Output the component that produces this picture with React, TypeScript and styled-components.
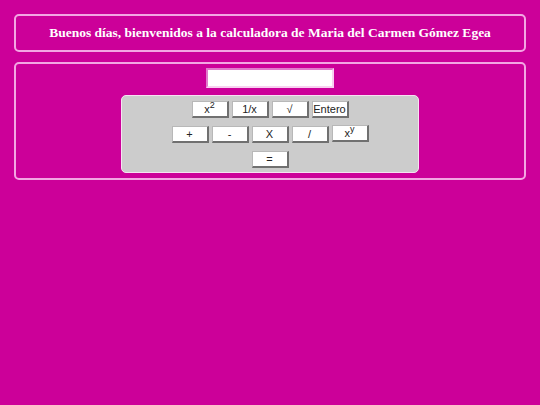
import React from 'react';
import styled, {createGlobalStyle} from 'styled-components';

const GlobalStyle = createGlobalStyle`
  html, body {
    margin: 0;
    padding: 0;
    background: #cc0099;
  }
  body {
    padding: 14px;
    font-family: "Liberation Serif", serif;
  }
`;

const Page = styled.div`
  display: flex;
  flex-direction: column;
  gap: 10px;
  width: 512px;
`;

const Frame = styled.div`
  border: 2px solid #f3a6e3;
  border-radius: 5px;
  box-sizing: border-box;
`;

const Header = styled(Frame)`
  height: 38px;
  display: flex;
  align-items: center;
  justify-content: center;
`;

const Title = styled.h1`
  margin: 0;
  font-family: "Liberation Serif", serif;
  font-weight: bold;
  font-size: 13.5px;
  color: #ffffff;
`;

const Body = styled(Frame)`
  height: 118px;
  display: flex;
  flex-direction: column;
  align-items: center;
  padding-top: 4px;
  gap: 7px;
`;

const Display = styled.input`
  width: 128px;
  height: 20px;
  box-sizing: border-box;
  border: 2px solid;
  border-color: #e07ccc #f8d0f0 #f8d0f0 #e07ccc;
  background: #ffffff;
  padding: 0 4px;
  font-family: "Liberation Sans", sans-serif;
  font-size: 12px;
`;

const Keypad = styled.div`
  width: 298px;
  height: 78px;
  box-sizing: border-box;
  background: #cccccc;
  border: 1px solid #f6e2f2;
  border-radius: 5px;
  display: flex;
  flex-direction: column;
  align-items: center;
  padding-top: 5px;
  gap: 8px;
`;

const Row = styled.div`
  display: flex;
  gap: 3px;
  align-items: flex-start;
`;

const Key = styled.button<{$raised?: boolean}>`
  width: 37px;
  height: 17px;
  box-sizing: border-box;
  padding: 0;
  margin-top: ${p => (p.$raised ? '-1px' : '0')};
  background: #ffffff;
  border-style: solid;
  border-width: 1px 2px 2px 1px;
  border-color: #b8b8b8 #707070 #707070 #b8b8b8;
  font-family: "Liberation Sans", sans-serif;
  font-size: 11px;
  line-height: 12px;
  color: #222222;
  display: flex;
  align-items: center;
  justify-content: center;

  sup {
    font-size: 9px;
    line-height: 0;
    position: relative;
    top: -4px;
    vertical-align: baseline;
  }
`;

const rowOne = [
  {label: <>x<sup>2</sup></>, raised: false},
  {label: '1/x'},
  {label: '√'},
  {label: 'Entero'}
];

const rowTwo = [
  {label: '+'},
  {label: '-'},
  {label: 'X'},
  {label: '/'},
  {label: <>x<sup>y</sup></>, raised: true}
];

export default function App() {
  return (
    <>
      <GlobalStyle />
      <Page>
        <Header>
          <Title>Buenos días, bienvenidos a la calculadora de Maria del Carmen Gómez Egea</Title>
        </Header>
        <Body>
          <Display type="text" />
          <Keypad>
            <Row>
              {rowOne.map((k, i) => (
                <Key key={i} $raised={k.raised}>{k.label}</Key>
              ))}
            </Row>
            <Row>
              {rowTwo.map((k, i) => (
                <Key key={i} $raised={k.raised}>{k.label}</Key>
              ))}
            </Row>
            <Row>
              <Key>=</Key>
            </Row>
          </Keypad>
        </Body>
      </Page>
    </>
  );
}
